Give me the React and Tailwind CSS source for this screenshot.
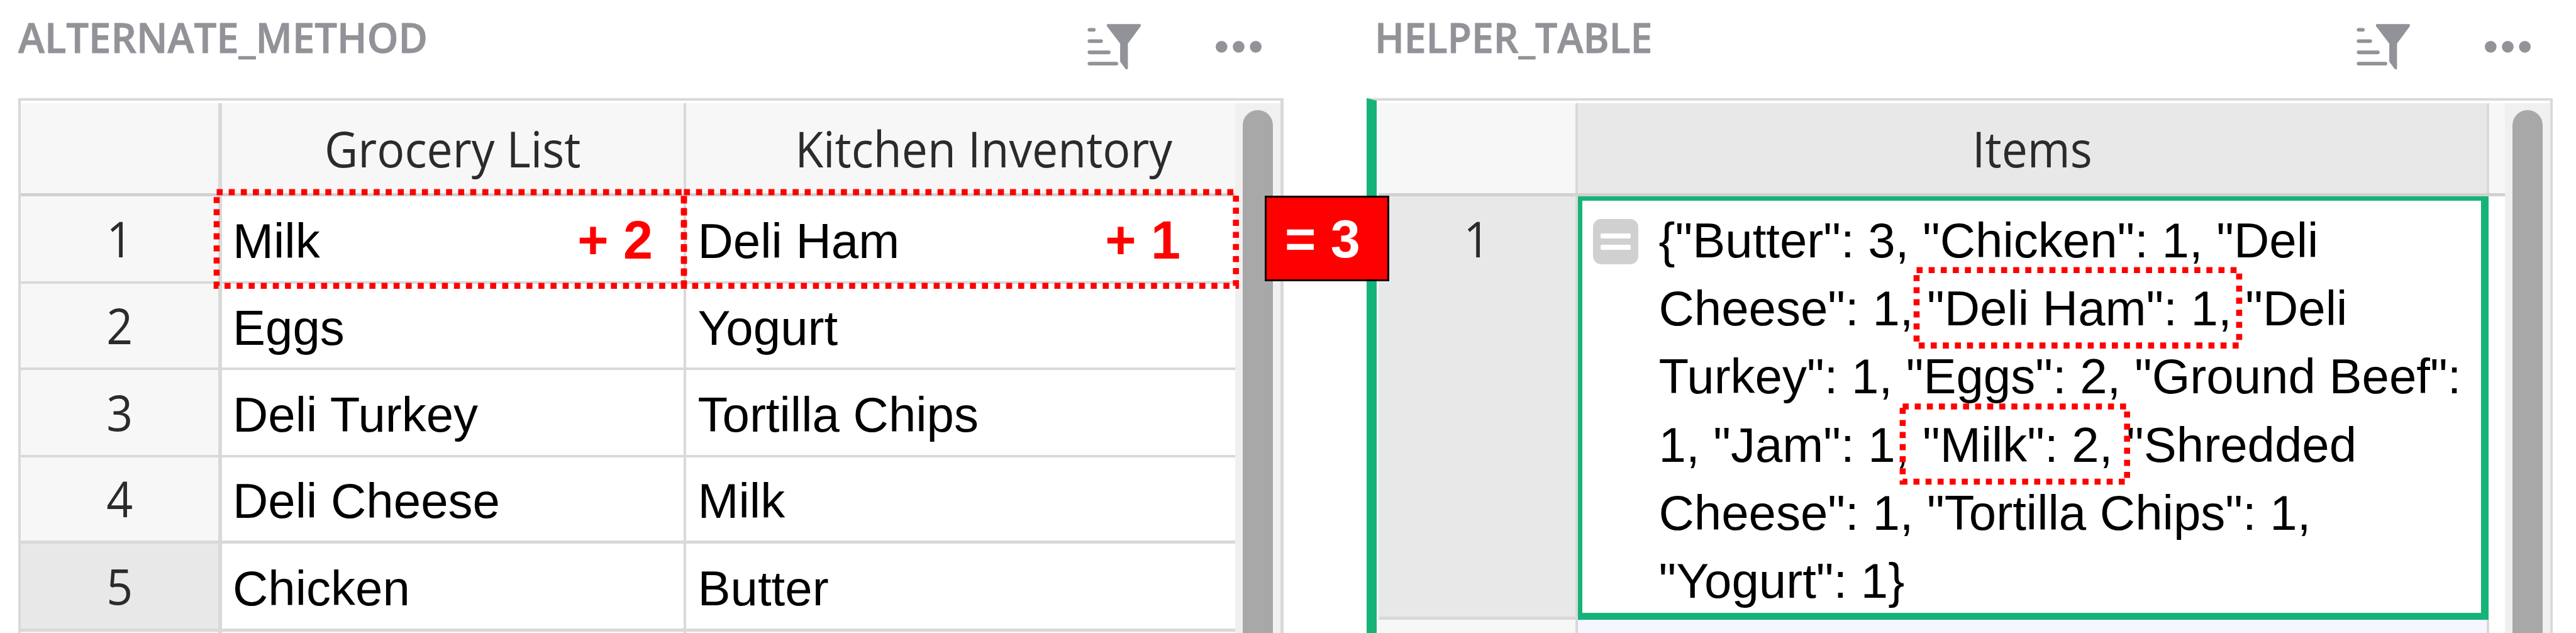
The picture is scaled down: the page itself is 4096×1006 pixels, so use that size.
const ROWS = [
  { n: 1, a: "Milk", b: "Deli Ham", plusA: "+ 2", plusB: "+ 1", size: "h-[139px] border-b-4" },
  { n: 2, a: "Eggs", b: "Yogurt", size: "h-[137px] border-b-4" },
  { n: 3, a: "Deli Turkey", b: "Tortilla Chips", size: "h-[139px] border-b-4" },
  { n: 4, a: "Deli Cheese", b: "Milk", size: "h-[137px] border-b-5" },
  { n: 5, a: "Chicken", b: "Butter", size: "h-[140px] border-b-5", active: true },
];

const LINES = [
  '{"Butter": 3, "Chicken": 1, "Deli',
  'Cheese": 1, "Deli Ham": 1, "Deli',
  'Turkey": 1, "Eggs": 2, "Ground Beef":',
  '1, "Jam": 1, "Milk": 2, "Shredded',
  'Cheese": 1, "Tortilla Chips": 1,',
  '"Yogurt": 1}',
];

const HEAD = "inline-block scale-x-[0.94] whitespace-nowrap font-['Open_Sans',sans-serif] text-[78px] leading-none text-[#2b2b2b]";
const DATA = "whitespace-nowrap font-['Liberation_Sans',Arial,sans-serif] text-[78px] text-black";
const PLUS = "ml-auto -mt-[1px] whitespace-nowrap font-['Liberation_Sans',Arial,sans-serif] text-[84.5px] leading-none font-bold text-[#ff0000]";

function SortFilterIcon() {
  return (
    <svg className="mt-[38px] h-[74.5px] w-[85.6px]" viewBox="1857 41 92 80" fill="#929299">
      <rect x="1857.5" y="48" width="13.5" height="6.2" rx="3" />
      <rect x="1857.5" y="67.2" width="26" height="6.2" rx="3" />
      <rect x="1857.5" y="86.5" width="39" height="6.2" rx="3" />
      <rect x="1857.5" y="105.8" width="52" height="6.2" rx="3" />
      <path d="M1891.5 41.3 H1947 Q1949.5 42.5 1948 45 L1926.2 74.5 V117.5 Q1924.5 120 1922 117.5 L1913 105.5 V74.5 L1890.5 45 Q1889.3 42.2 1891.5 41.3 Z" />
    </svg>
  );
}

function DotsIcon() {
  return (
    <svg className="mt-[65px] ml-[118px] h-[18.7px] w-[73px]" viewBox="0 0 78.4 20" fill="#929299">
      <circle cx="10" cy="10" r="10" />
      <circle cx="39.2" cy="10" r="10" />
      <circle cx="68.4" cy="10" r="10" />
    </svg>
  );
}

function Title({ children, className }) {
  return (
    <div className="flex h-[156px] shrink-0 items-start">
      <h2 className={"origin-left whitespace-nowrap font-['Open_Sans',sans-serif] text-[66px] leading-[117px] font-semibold text-[#929299] [-webkit-text-stroke:1px_#929299] " + className}>
        {children}
      </h2>
      <div className="mr-[35px] ml-auto flex">
        <SortFilterIcon />
        <DotsIcon />
      </div>
    </div>
  );
}

function Scrollbar() {
  return (
    <div className="h-full w-[72px] shrink-0 bg-[#f0f0f0] pt-[11px]">
      <div className="mx-[12px] h-full rounded-t-full bg-[#a8a8a8]" />
    </div>
  );
}

export default function App() {
  return (
    <div className="relative flex h-[1006px] w-[4096px] overflow-hidden bg-white">
      <section className="ml-[29px] flex h-[1006px] w-[2012px] shrink-0 flex-col overflow-hidden">
        <Title className="scale-x-[0.96]">ALTERNATE_METHOD</Title>
        <div className="flex h-[900px] shrink-0 border-t-4 border-r-5 border-l-4 border-[#d9d9d9] pt-[4px]">
          <div className="w-[1931px] shrink-0">
            <div className="flex h-[148px] border-b-5 border-[#d1d1d1] bg-[#f7f7f7]">
              <div className="w-[320px] shrink-0 border-r-6 border-[#d9d9d9]" />
              <div className="flex w-[738px] shrink-0 items-center justify-center border-r-4 border-[#d9d9d9]">
                <span className={HEAD}>Grocery List</span>
              </div>
              <div className="flex flex-1 items-center justify-center pl-[73px]">
                <span className={HEAD}>Kitchen Inventory</span>
              </div>
            </div>
            {ROWS.map((r) => (
              <div key={r.n} className={"flex border-[#d9d9d9] " + r.size}>
                <div className={"flex w-[320px] shrink-0 items-center justify-center border-r-6 border-[#d9d9d9] pb-[2px] " + (r.active ? "bg-[#e8e8e8]" : "bg-[#f7f7f7]")}>
                  <span className={HEAD}>{r.n}</span>
                </div>
                <div className="flex w-[738px] shrink-0 items-center border-r-4 border-[#d9d9d9] pt-[6px] pr-[49px] pl-[17px]">
                  <span className={DATA + " leading-none"}>{r.a}</span>
                  {r.plusA && <span className={PLUS}>{r.plusA}</span>}
                </div>
                <div className="flex flex-1 items-center pt-[6px] pr-[87px] pl-[18.5px]">
                  <span className={DATA + " leading-none"}>{r.b}</span>
                  {r.plusB && <span className={PLUS}>{r.plusB}</span>}
                </div>
              </div>
            ))}
            <div className="flex h-[60px]">
              <div className="w-[320px] border-r-6 border-[#d9d9d9] bg-[#f7f7f7]" />
              <div className="w-[738px] border-r-4 border-[#d9d9d9]" />
            </div>
          </div>
          <Scrollbar />
        </div>
      </section>

      <section className="ml-[132px] flex h-[1006px] w-[1886px] shrink-0 flex-col overflow-hidden">
        <Title className="ml-[12.5px] scale-x-[0.945]">HELPER_TABLE</Title>
        <div className="flex h-[900px] shrink-0 border-t-4 border-r-4 border-l-16 border-t-[#d9d9d9] border-r-[#d9d9d9] border-l-[#16b378] pt-[4px] pl-[3px]">
          <div className="w-[1791px] shrink-0">
            <div className="flex h-[148px] border-b-5 border-[#d1d1d1] bg-[#f7f7f7]">
              <div className="w-[317px] shrink-0 border-r-4 border-[#d9d9d9]" />
              <div className="flex w-[1449px] shrink-0 items-center justify-center border-r-4 border-[#d9d9d9] bg-[#e8e8e8]">
                <span className={HEAD}>Items</span>
              </div>
            </div>
            <div className="flex h-[673px]">
              <div className="w-[317px] shrink-0 border-r-4 border-b-5 border-[#d9d9d9] bg-[#e8e8e8]">
                <div className="flex h-[135px] items-center justify-center pb-[2px]">
                  <span className={HEAD}>1</span>
                </div>
              </div>
              <div className="flex w-[1448px] shrink-0 border-t-7 border-r-12 border-b-11 border-l-7 border-[#16b378] pl-[17px]">
                <div className="mt-[29px] flex h-[72px] w-[72px] shrink-0 flex-col items-center justify-center gap-[10px] rounded-[13px] bg-[#d0d0d0]">
                  <div className="h-[8px] w-[48px] rounded-[2px] bg-white" />
                  <div className="h-[8px] w-[48px] rounded-[2px] bg-white" />
                </div>
                <div className="ml-[32.5px] pt-[9px]">
                  {LINES.map((l) => (
                    <div key={l} className={DATA + " leading-[108.2px]"}>{l}</div>
                  ))}
                </div>
              </div>
            </div>
            <div className="flex h-[60px]">
              <div className="w-[317px] shrink-0 border-r-4 border-[#d9d9d9] bg-[#f7f7f7]" />
              <div className="w-[1449px] shrink-0 border-r-4 border-[#d9d9d9] bg-[#f5f6ff]" />
            </div>
          </div>
          <Scrollbar />
        </div>
      </section>

      <svg className="absolute top-0 left-0" width="4096" height="1006" fill="none" stroke="#ff0000" strokeWidth="9.6" strokeDasharray="9.6 9.6">
        <rect x="344.5" y="305.4" width="743" height="148.9" />
        <rect x="1087.5" y="305.4" width="877.7" height="148.9" />
        <rect x="3047.5" y="429.2" width="512.9" height="119.9" />
        <rect x="3025.4" y="646" width="356.8" height="119.5" />
      </svg>
      <div className="absolute top-[311px] left-[2011px] flex h-[136px] w-[198px] items-center border-3 border-black bg-[#ff0000] pt-[3px] pl-[29px]">
        <span className="whitespace-nowrap font-['Liberation_Sans',Arial,sans-serif] text-[84.5px] leading-none font-bold text-white">= 3</span>
      </div>
    </div>
  );
}
